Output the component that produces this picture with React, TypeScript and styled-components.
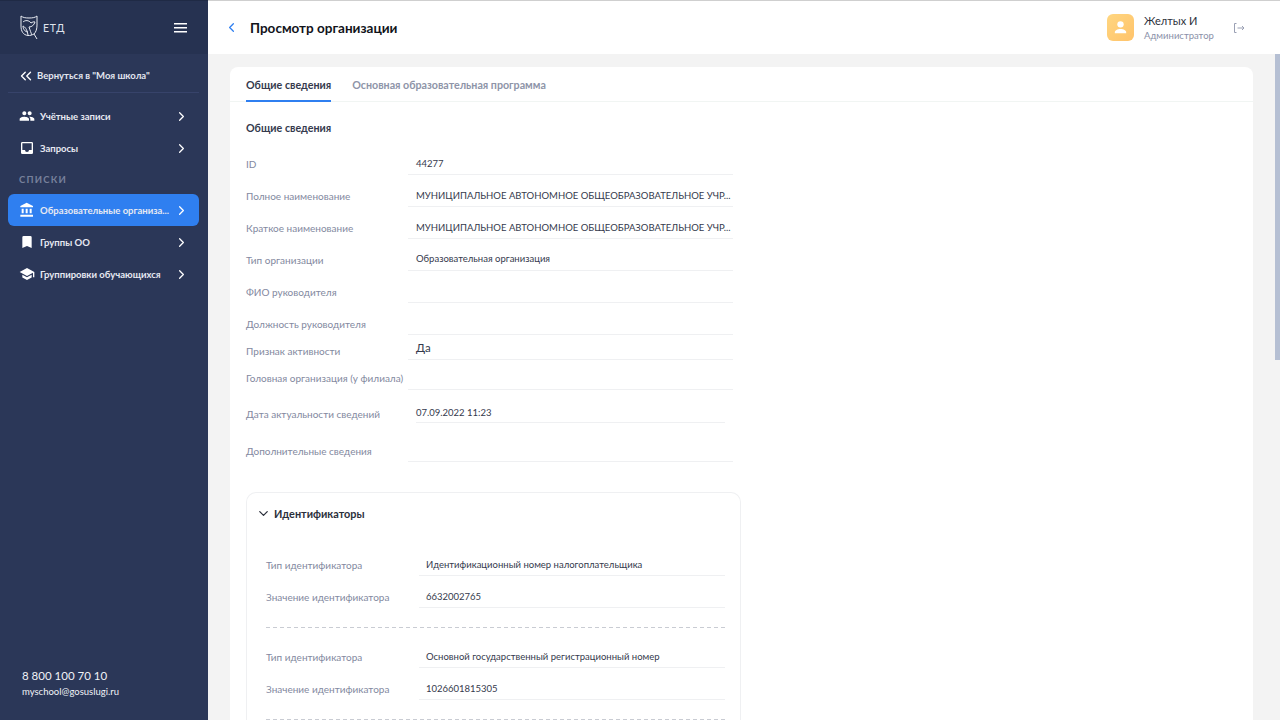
import React from "react";
import styled, { createGlobalStyle } from "styled-components";
import { ChevronRight, ChevronLeft, ChevronDown, ChevronsLeft } from "lucide-react";

const Global = createGlobalStyle`
  html, body { margin: 0; padding: 0; height: 100%; overflow: hidden; }
  body { font-family: Lato, "Noto Sans", "Liberation Sans", sans-serif; background: #f3f3f3; }
  * { box-sizing: border-box; }
`;

const Page = styled.div`
  display: flex;
  width: 1280px;
  height: 720px;
  overflow: hidden;
`;

const Sidebar = styled.aside`
  width: 208px;
  flex: none;
  display: flex;
  flex-direction: column;
  background: #2b3758;
  color: #fff;
`;

const Brand = styled.div`
  height: 54px;
  flex: none;
  display: flex;
  align-items: center;
  padding: 0 21px 0 20px;
  background: #263251;
  border-top: 1px solid #1f2a45;
`;

const BrandName = styled.span`
  margin-left: 5px;
  font-size: 10.500px;
  letter-spacing: 0.8px;
  color: #dfe3ec;
  flex: 1;
`;

const BackLink = styled.div`
  margin: 3px 9px 0 8px;
  height: 36px;
  padding: 2px 0 0 9px;
  display: flex;
  align-items: center;
  gap: 2px;
  font-size: 9.500px;
  font-weight: 700;
  color: #e3e6f0;
  border-bottom: 1px solid #37436a;
`;

const Nav = styled.nav`
  display: flex;
  flex-direction: column;
  padding: 7px 9px 0 8px;
`;

const NavItem = styled.div<{ $active?: boolean }>`
  height: 32px;
  padding: 0 10px 0 11px;
  display: flex;
  align-items: center;
  border-radius: 6px;
  font-size: 9.500px;
  font-weight: 700;
  color: #e7e9f2;
  background: ${(p) => (p.$active ? "#2f7ff0" : "transparent")};
`;

const NavIcon = styled.span`
  width: 21px;
  flex: none;
  display: flex;
  align-items: center;
`;

const NavLabel = styled.span`
  flex: 1;
  white-space: nowrap;
`;

const SectionCaption = styled.div`
  height: 30px;
  padding: 9px 11px 0;
  font-size: 9.500px;
  line-height: 14px;
  font-weight: 700;
  letter-spacing: 1.200px;
  color: #77809b;
`;

const Contacts = styled.div`
  margin-top: auto;
  padding: 0 22px 21px;
  display: flex;
  flex-direction: column;
  gap: 2px;
  color: #f0f2f7;
`;

const Phone = styled.div`
  font-size: 11.500px;
  line-height: 15px;
`;

const Mail = styled.div`
  font-size: 9.500px;
  line-height: 14px;
`;

const Main = styled.main`
  flex: 1;
  min-width: 0;
  display: flex;
  flex-direction: column;
`;

const TopBar = styled.header`
  height: 54px;
  flex: none;
  display: flex;
  align-items: center;
  padding: 0 35px 0 16px;
  background: #fff;
  border-top: 1px solid #cfcfcf;
`;

const BackIcon = styled.span`
  width: 26px;
  display: flex;
  color: #2f7ff0;
`;

const Title = styled.h1`
  margin: 0;
  flex: 1;
  font-size: 13.500px;
  font-weight: 700;
  color: #11131a;
`;

const Avatar = styled.div`
  width: 27px;
  height: 27px;
  border-radius: 6px;
  background: linear-gradient(135deg, #ffd680, #ffc36b);
  display: flex;
  align-items: center;
  justify-content: center;
  margin-right: 10px;
`;

const UserBox = styled.div`
  width: 89px;
  display: flex;
  flex-direction: column;
`;

const UserName = styled.div`
  font-size: 11px;
  line-height: 15px;
  color: #2b2f3b;
`;

const UserRole = styled.div`
  font-size: 9.500px;
  line-height: 15px;
  color: #8a90a8;
`;

const ContentArea = styled.div`
  flex: 1;
  min-height: 0;
  display: flex;
  position: relative;
  padding: 13px 27px 0 22px;
  overflow: hidden;
`;

const Scrollbar = styled.div`
  position: absolute;
  right: 0;
  top: 0;
  width: 5px;
  height: 306px;
  background: #b5bfd3;
`;

const Card = styled.section`
  flex: 1;
  background: #fff;
  border-radius: 8px 8px 0 0;
`;

const Tabs = styled.div`
  height: 35px;
  display: flex;
  gap: 21px;
  padding-left: 16px;
  border-bottom: 1px solid #f1f5f3;
`;

const Tab = styled.div<{ $active?: boolean }>`
  height: 35px;
  padding-top: 1px;
  display: flex;
  align-items: center;
  font-size: 10.700px;
  font-weight: 700;
  color: ${(p) => (p.$active ? "#353a4d" : "#8e94a8")};
  border-bottom: 2px solid ${(p) => (p.$active ? "#2f7ff0" : "transparent")};
`;

const Body = styled.div`
  padding: 0 16px;
  width: 519px;
`;

const Heading = styled.h2`
  margin: 0;
  height: 41px;
  padding-top: 18px;
  line-height: 16px;
  font-size: 10.700px;
  font-weight: 700;
  color: #353a4d;
`;

const Row = styled.div<{ $h: number }>`
  display: flex;
  height: ${(p) => p.$h}px;
`;

const Label = styled.div<{ $pad?: number }>`
  flex: none;
  width: 162px;
  align-self: flex-end;
  padding-bottom: ${(p) => p.$pad ?? 3}px;
  line-height: 16px;
  font-size: 10px;
  color: #8389a0;
  white-space: nowrap;
`;

const Value = styled.div<{ $inset?: number; $big?: boolean; $pad?: number }>`
  flex: 1;
  min-width: 0;
  margin-right: ${(p) => p.$inset ?? 0}px;
  padding-left: ${(p) => (p.$inset ? 0 : 8)}px;
  margin-left: ${(p) => p.$inset ?? 0}px;
  display: flex;
  align-items: flex-end;
  padding-bottom: ${(p) => p.$pad ?? 2}px;
  line-height: 16px;
  font-size: ${(p) => (p.$big ? 11.5 : 9.5)}px;
  color: #353a4d;
  border-bottom: 1px solid #eff0f2;
`;

const ValueText = styled.span`
  white-space: nowrap;
`;

const Panel = styled.div`
  margin-top: 30px;
  width: 495px;
  height: 400px;
  border: 1px solid #eff0f2;
  border-bottom: 0;
  border-radius: 10px 10px 0 0;
  padding: 0 15px 0 19px;
`;

const PanelHead = styled.div`
  height: 41px;
  margin-left: -10px;
  display: flex;
  align-items: center;
  gap: 3px;
  font-size: 10.900px;
  font-weight: 700;
  color: #2b2f3b;
`;

const IdRows = styled.div`
  padding-top: 10px;
`;

const IdLabel = styled(Label)`
  width: 153px;
`;

const IdValue = styled(Value)`
  padding-left: 7px;
`;

const Dashed = styled.div<{ $gap: number }>`
  height: 1px;
  margin-top: 19px;
  margin-bottom: ${(p) => p.$gap - 1}px;
  background: repeating-linear-gradient(to right, #c9ccd3 0 4px, transparent 4px 7px);
`;

const BackChevrons = styled(ChevronsLeft)`
  flex: none;
`;

const Owl = () => (
  <svg width="18" height="25" viewBox="0 0 18 25" fill="none" stroke="#e8ebf2" strokeWidth="1">
    <path d="M1 1c2 1.500 4 2 8 2s6-.5 8-2v9c0 4-1 7-3 9" />
    <path d="M1 1v10c0 5 2 9 7 9.500 2 .2 4-.5 6-1.500l3 5" />
    <path d="M3 7c2-2 6-2 8 1 1.500-1 3-1.500 4-1-1 3-3 5-6 5" />
    <path d="M3 11c2 1 4 3 5 9M3 11c0 3 2 6 5 6" />
    <path d="M9 12c1 3 2 6 3 8" />
  </svg>
);

const Burger = () => (
  <svg width="13" height="10" viewBox="0 0 13 10" fill="#fff">
    <rect y="0" width="13" height="1.500" />
    <rect y="4" width="13" height="1.500" />
    <rect y="8" width="13" height="1.500" />
  </svg>
);

const Users = () => (
  <svg width="16" height="16" viewBox="0 0 24 24" fill="#fff">
    <path d="M16 11c1.660 0 2.990-1.340 2.990-3S17.660 5 16 5s-3 1.340-3 3 1.340 3 3 3zm-8 0c1.660 0 2.990-1.340 2.990-3S9.660 5 8 5 5 6.340 5 8s1.340 3 3 3zm0 2c-2.330 0-7 1.170-7 3.500V19h14v-2.500c0-2.330-4.670-3.500-7-3.500zm8 0c-.290 0-.620.020-.970.050 1.160.840 1.970 1.970 1.970 3.450V19h6v-2.500c0-2.330-4.670-3.500-7-3.500z" />
  </svg>
);

const Inbox = () => (
  <svg width="16" height="16" viewBox="0 0 24 24" fill="#fff">
    <path d="M19 3H5a2 2 0 0 0-2 2v14a2 2 0 0 0 2 2h14a2 2 0 0 0 2-2V5a2 2 0 0 0-2-2zm0 12h-4a3 3 0 0 1-6 0H5V5h14v10z" />
  </svg>
);

const Bank = () => (
  <svg width="16" height="16" viewBox="0 0 24 24" fill="#fff">
    <path d="M4 10v7h3v-7H4zm6 0v7h3v-7h-3zM2 22h19v-3H2v3zm14-12v7h3v-7h-3zM11.500 1 2 6v2h19V6l-9.500-5z" />
  </svg>
);

const Bookmark = () => (
  <svg width="16" height="16" viewBox="0 0 24 24" fill="#fff">
    <path d="M17 3H7a2 2 0 0 0-2 2v16l7-3 7 3V5a2 2 0 0 0-2-2z" />
  </svg>
);

const School = () => (
  <svg width="16" height="16" viewBox="0 0 24 24" fill="#fff">
    <path d="M5 13.180v4L12 21l7-3.820v-4L12 17l-7-3.820zM12 3 1 9l11 6 9-4.910V17h2V9L12 3z" />
  </svg>
);

const Person = () => (
  <svg width="17" height="17" viewBox="0 0 24 24" fill="#fff">
    <circle cx="12" cy="7.500" r="4.500" />
    <path d="M12 14c-4.500 0-8 2-8 4.500V20h16v-1.500c0-2.500-3.500-4.500-8-4.500z" />
  </svg>
);

const Logout = () => (
  <svg width="12" height="12" viewBox="0 0 12 12" fill="none" stroke="#9aa0b4" strokeWidth="1">
    <path d="M3.500 1.500H1.500v9h2M4.500 6h6.500M9 4l2 2-2 2" />
  </svg>
);

const sideChevron = <ChevronRight size={15} strokeWidth={2} color="#fff" />;

type Field = {
  label: string;
  value?: string;
  h: number;
  big?: boolean;
  inset?: number;
  labelPad?: number;
  valuePad?: number;
};

const fields: Field[] = [
  { label: "ID", value: "44277", h: 32 },
  { label: "Полное наименование", value: "МУНИЦИПАЛЬНОЕ АВТОНОМНОЕ ОБЩЕОБРАЗОВАТЕЛЬНОЕ УЧР...", h: 32 },
  { label: "Краткое наименование", value: "МУНИЦИПАЛЬНОЕ АВТОНОМНОЕ ОБЩЕОБРАЗОВАТЕЛЬНОЕ УЧР...", h: 32 },
  { label: "Тип организации", value: "Образовательная организация", h: 32, valuePad: 3 },
  { label: "ФИО руководителя", h: 32 },
  { label: "Должность руководителя", h: 32 },
  { label: "Признак активности", value: "Да", h: 25, big: true, labelPad: 1, valuePad: 3 },
  { label: "Головная организация (у филиала)", h: 30, labelPad: 4 },
  { label: "Дата актуальности сведений", value: "07.09.2022 11:23", h: 33, inset: 8, labelPad: 1, valuePad: 1 },
  { label: "Дополнительные сведения", h: 39 },
];

const ids = [
  ["Идентификационный номер налогоплательщика", "6632002765"],
  ["Основной государственный регистрационный номер", "1026601815305"],
];

export default function App() {
  return (
    <Page>
      <Global />
      <Sidebar>
        <Brand>
          <Owl />
          <BrandName>ЕТД</BrandName>
          <Burger />
        </Brand>
        <BackLink>
          <BackChevrons size={18} strokeWidth={1.8} color="#fff" />
          Вернуться в "Моя школа"
        </BackLink>
        <Nav>
          <NavItem><NavIcon><Users /></NavIcon><NavLabel>Учётные записи</NavLabel>{sideChevron}</NavItem>
          <NavItem><NavIcon><Inbox /></NavIcon><NavLabel>Запросы</NavLabel>{sideChevron}</NavItem>
          <SectionCaption>СПИСКИ</SectionCaption>
          <NavItem $active><NavIcon><Bank /></NavIcon><NavLabel>Образовательные организа...</NavLabel>{sideChevron}</NavItem>
          <NavItem><NavIcon><Bookmark /></NavIcon><NavLabel>Группы ОО</NavLabel>{sideChevron}</NavItem>
          <NavItem><NavIcon><School /></NavIcon><NavLabel>Группировки обучающихся</NavLabel>{sideChevron}</NavItem>
        </Nav>
        <Contacts>
          <Phone>8 800 100 70 10</Phone>
          <Mail>myschool@gosuslugi.ru</Mail>
        </Contacts>
      </Sidebar>
      <Main>
        <TopBar>
          <BackIcon><ChevronLeft size={15} strokeWidth={2} /></BackIcon>
          <Title>Просмотр организации</Title>
          <Avatar><Person /></Avatar>
          <UserBox>
            <UserName>Желтых И</UserName>
            <UserRole>Администратор</UserRole>
          </UserBox>
          <Logout />
        </TopBar>
        <ContentArea>
          <Card>
            <Tabs>
              <Tab $active>Общие сведения</Tab>
              <Tab>Основная образовательная программа</Tab>
            </Tabs>
            <Body>
              <Heading>Общие сведения</Heading>
              {fields.map((f) => (
                <Row key={f.label} $h={f.h}>
                  <Label $pad={f.labelPad}>{f.label}</Label>
                  <Value $big={f.big} $inset={f.inset} $pad={f.valuePad}>
                    {f.value && <ValueText>{f.value}</ValueText>}
                  </Value>
                </Row>
              ))}
              <Panel>
                <PanelHead>
                  <ChevronDown size={15} strokeWidth={2} />
                  Идентификаторы
                </PanelHead>
                <IdRows>
                  {ids.map(([type, val]) => (
                    <React.Fragment key={val}>
                      <Row $h={32}><IdLabel>Тип идентификатора</IdLabel><IdValue>{type}</IdValue></Row>
                      <Row $h={32}><IdLabel>Значение идентификатора</IdLabel><IdValue>{val}</IdValue></Row>
                      <Dashed $gap={9} />
                    </React.Fragment>
                  ))}
                </IdRows>
              </Panel>
            </Body>
          </Card>
          <Scrollbar />
        </ContentArea>
      </Main>
    </Page>
  );
}
